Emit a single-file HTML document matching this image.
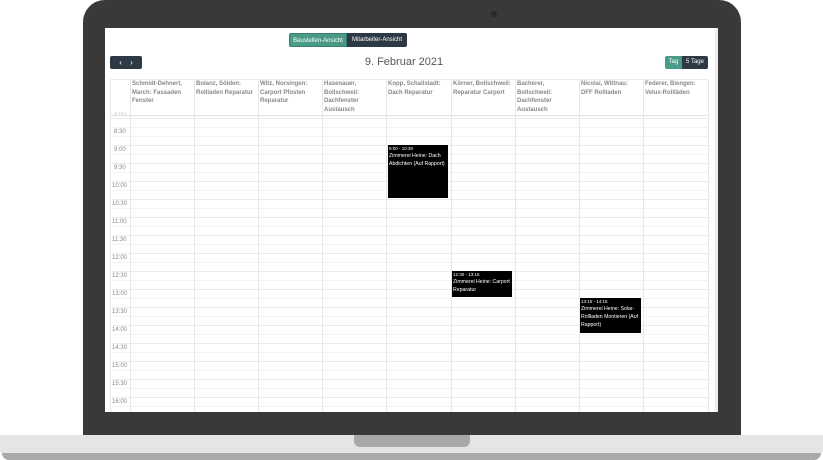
<!DOCTYPE html>
<html><head><meta charset="utf-8"><style>
*{margin:0;padding:0;box-sizing:border-box}
body{width:823px;height:460px;background:#fff;position:relative;overflow:hidden;font-family:"Liberation Sans",sans-serif}
.lap{position:absolute;left:83px;top:0;width:658px;height:436px;background:#3a3838;border-radius:22px 22px 0 0}
.cam{position:absolute;left:408px;top:11px;width:6px;height:6px;border-radius:50%;background:#2a2a2a}
.base{position:absolute;left:0;top:435px;width:823px;height:19px;background:#e5e5e7;border-radius:0 0 4px 4px}
.base2{position:absolute;left:2px;top:453px;width:819px;height:7px;background:#a9aaac;border-radius:0 0 10px 10px}
.notch{position:absolute;left:354px;top:435px;width:116px;height:12px;background:#a7a9ab;border-radius:0 0 6px 6px}
.scr{position:absolute;left:105px;top:28px;width:613px;height:384px;background:#fff;overflow:hidden}
.edge{position:absolute;right:0;top:0;width:3px;height:100%;background:#ececee}
.btn{position:absolute;font-size:6px;color:#fff;text-align:center;line-height:14px;height:14px}
.t{position:absolute;font-size:6px;color:#888}
.col{position:absolute;top:51px;height:340px;border-left:1px solid #e8e8e8}
.hd{position:absolute;top:52px;font-size:6px;color:#888;font-weight:bold;line-height:8.5px;width:60px}
.row{position:absolute;left:5px;width:598px;height:1px;background:#ececec}
.ev{position:absolute;background:#000;color:#fff;font-size:5.2px;line-height:8px;padding:1px 1px}
.ev b{font-weight:normal;font-size:4.5px;display:block;line-height:6px}
</style></head><body>
<div class="lap"><div class="cam"></div></div>
<div class="base"></div><div class="base2"></div><div class="notch"></div>
<div class="scr">
<div class="edge"></div>
<div class="btn" style="left:184px;top:5px;width:58px;background:#4a9a88;border-radius:2px 0 0 2px;border:1px solid #3c7f70">Baustellen-Ansicht</div>
<div class="btn" style="left:242px;top:5px;width:60px;background:#2d3a46;border-radius:0 2px 2px 0">Mitarbeiter-Ansicht</div>
<div class="btn" style="left:5px;top:28px;width:32px;height:13px;background:#2d3a46;border-radius:2px;font-size:8px;line-height:13px;word-spacing:6px">‹ ›</div>
<div style="position:absolute;left:0;width:598px;top:28px;text-align:center;font-size:11px;color:#555">9. Februar 2021</div>
<div class="btn" style="left:560px;top:28px;width:17px;height:13px;line-height:13px;background:#4a9a88;border-radius:2px 0 0 2px">Tag</div>
<div class="btn" style="left:577px;top:28px;width:26px;height:13px;line-height:13px;background:#2d3a46;border-radius:0 2px 2px 0">5 Tage</div>
<div class="row" style="top:51px"></div>
<div class="col" style="left:5px"></div>
<div class="col" style="left:25px"></div><div class="col" style="left:89px"></div><div class="col" style="left:153px"></div><div class="col" style="left:217px"></div><div class="col" style="left:281px"></div><div class="col" style="left:346px"></div><div class="col" style="left:410px"></div><div class="col" style="left:474px"></div><div class="col" style="left:538px"></div><div class="col" style="left:603px"></div>
<div class="hd" style="left:27px">Schmidt-Dehnert, March: Fassaden Fenster</div>
<div class="hd" style="left:91px">Bolanz, Sölden: Rollladen Reparatur</div>
<div class="hd" style="left:155px">Witz, Norsingen: Carport Pfosten Reparatur</div>
<div class="hd" style="left:219px;width:50px">Hasenauer, Bollschweil: Dachfenster Austausch</div>
<div class="hd" style="left:283px">Kopp, Schallstadt: Dach Reparatur</div>
<div class="hd" style="left:348px">Körner, Bollschweil: Reparatur Carport</div>
<div class="hd" style="left:412px;width:50px">Bacherer, Bollschweil: Dachfenster Austausch</div>
<div class="hd" style="left:476px">Nicolai, Wittnau: DFF Rollladen</div>
<div class="hd" style="left:540px">Federer, Biengen: Velux-Rollläden</div>
<div class="t" style="left:9px;top:84px;color:#ccc;height:3px;overflow:hidden">8:00</div>
<div class="row" style="top:87px;background:#e2e2e2"></div>
<div class="row" style="top:90px"></div>
<div class="row" style="top:99px;background:#f3f3f3"></div>
<div class="row" style="top:108px;background:#f3f3f3"></div>
<div class="t" style="left:9px;top:101px">8:30</div>
<div class="row" style="top:117px"></div><div class="t" style="left:9px;top:119px">9:00</div>
<div class="row" style="top:126px;background:#f3f3f3"></div>
<div class="row" style="top:135px"></div><div class="t" style="left:9px;top:137px">9:30</div>
<div class="row" style="top:144px;background:#f3f3f3"></div>
<div class="row" style="top:153px"></div><div class="t" style="left:7px;top:155px">10:00</div>
<div class="row" style="top:162px;background:#f3f3f3"></div>
<div class="row" style="top:171px"></div><div class="t" style="left:7px;top:173px">10:30</div>
<div class="row" style="top:180px;background:#f3f3f3"></div>
<div class="row" style="top:189px"></div><div class="t" style="left:7px;top:191px">11:00</div>
<div class="row" style="top:198px;background:#f3f3f3"></div>
<div class="row" style="top:207px"></div><div class="t" style="left:7px;top:209px">11:30</div>
<div class="row" style="top:216px;background:#f3f3f3"></div>
<div class="row" style="top:225px"></div><div class="t" style="left:7px;top:227px">12:00</div>
<div class="row" style="top:234px;background:#f3f3f3"></div>
<div class="row" style="top:243px"></div><div class="t" style="left:7px;top:245px">12:30</div>
<div class="row" style="top:252px;background:#f3f3f3"></div>
<div class="row" style="top:261px"></div><div class="t" style="left:7px;top:263px">13:00</div>
<div class="row" style="top:270px;background:#f3f3f3"></div>
<div class="row" style="top:279px"></div><div class="t" style="left:7px;top:281px">13:30</div>
<div class="row" style="top:288px;background:#f3f3f3"></div>
<div class="row" style="top:297px"></div><div class="t" style="left:7px;top:299px">14:00</div>
<div class="row" style="top:306px;background:#f3f3f3"></div>
<div class="row" style="top:315px"></div><div class="t" style="left:7px;top:317px">14:30</div>
<div class="row" style="top:324px;background:#f3f3f3"></div>
<div class="row" style="top:333px"></div><div class="t" style="left:7px;top:335px">15:00</div>
<div class="row" style="top:342px;background:#f3f3f3"></div>
<div class="row" style="top:351px"></div><div class="t" style="left:7px;top:353px">15:30</div>
<div class="row" style="top:360px;background:#f3f3f3"></div>
<div class="row" style="top:369px"></div><div class="t" style="left:7px;top:371px">16:00</div>
<div class="row" style="top:378px;background:#f3f3f3"></div>
<div class="ev" style="left:283px;top:117px;width:60px;height:53px"><b>9:00 - 10:30</b>Zimmerei Heine: Dach Abdichten (Auf Rapport)</div>
<div class="ev" style="left:347px;top:243px;width:60px;height:26px"><b>12:30 - 13:15</b>Zimmerei Heine: Carport Reparatur</div>
<div class="ev" style="left:475px;top:270px;width:61px;height:35px"><b>13:15 - 14:15</b>Zimmerei Heine: Solar-Rollladen Montieren (Auf Rapport)</div>
</div>
</body></html>
